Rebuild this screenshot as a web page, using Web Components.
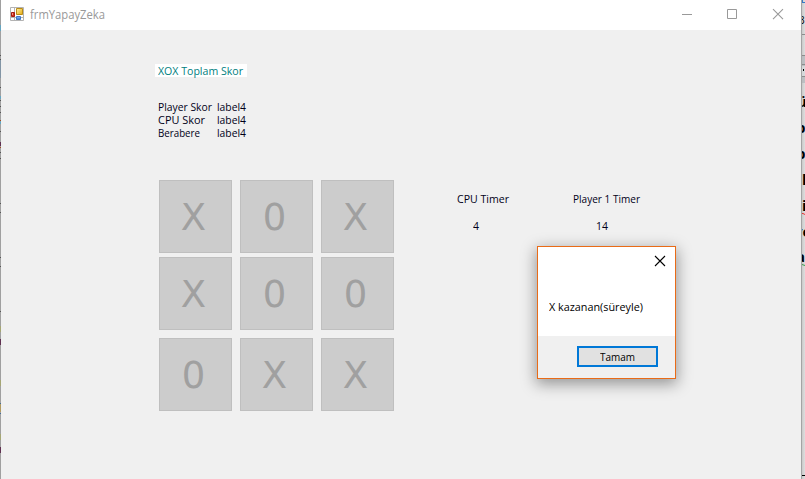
<!DOCTYPE html>
<html lang="tr"><head><meta charset="utf-8"><title>frmYapayZeka</title>
<style>
html,body{margin:0;height:479px;overflow:hidden;background:#ddd}
body{font:11px "Open Sans","Noto Sans",sans-serif;color:#000}
</style></head><body>
<app-desktop></app-desktop>
<script>
const define = (name, markup, init) => customElements.define(name, class extends HTMLElement {
  connectedCallback() {
    if (this.shadowRoot) return;
    this.attachShadow({mode: 'open'}).innerHTML = markup;
    if (init) init.call(this, this.shadowRoot);
  }
});

// A single line of text condensed to the width given by "w".
define('fit-text', `<style>
:host{display:block;height:13px;line-height:13px;white-space:nowrap}
span{display:inline-block;transform-origin:0 50%}
</style><span><slot></slot></span>`, function (root) {
  const span = root.querySelector('span'), w = +this.getAttribute('w');
  this.style.width = w + 'px';
  span.style.transform = 'scaleX(' + w / span.getBoundingClientRect().width + ')';
});

define('edge-left', `<style>:host{display:block;width:1px;height:479px}svg{display:block}</style>
<svg width="1" height="479" shape-rendering="crispEdges"><path fill="#a0a0a0" d="M0 0h1v479H0z"/>
<path fill="#66a5c0" d="M0 25h1v6H0zM0 96h1v3H0zM0 121h1v3H0z"/><path fill="#8295a5" d="M0 60h1v18H0z"/>
<path fill="#555" d="M0 55h1v1H0zM0 59h1v1H0zM0 87h1v1H0zM0 100h1v1H0zM0 106h1v1H0zM0 112h1v1H0zM0 131h1v1H0zM0 152h1v1H0zM0 158h1v1H0zM0 203h1v1H0zM0 212h1v1H0zM0 257h1v1H0zM0 266h1v1H0zM0 311h1v1H0z"/>
<path fill="#a5a674" d="M0 326h1v6H0zM0 380h1v6H0zM0 434h1v6H0z"/><path fill="#b09a62" d="M0 404h1v8H0z"/>
<path fill="#5f3050" d="M0 142h1v4H0zM0 339h1v6H0zM0 447h1v6H0z"/><path fill="#456b91" d="M0 403h1v1H0zM0 413h1v1H0z"/>
<path fill="#a54b1c" d="M0 120h1v1H0zM0 147h1v1H0z"/></svg>`);

define('edge-right', `<style>:host{display:block;width:4px;height:479px}svg{display:block}
text{font:bold 15px "Open Sans",sans-serif}</style>
<svg width="4" height="479"><defs><linearGradient id="s"><stop stop-color="#c3c3c3"/><stop offset="1" stop-color="#dedede"/></linearGradient></defs>
<path fill="url(#s)" d="M0 0h4v479H0z"/><path fill="#aeb2b7" d="M0 56h4v27H0z" opacity=".65"/>
<path fill="#fff" opacity=".4" d="M1 66h3v10H1z"/>
<path fill="#8c8c8c" d="M0 34h4v1H0zM0 55h4v1H0zM0 64h4v1H0zM0 76h4v1H0z"/><path fill="#3678c5" d="M1 0h1v2h2v1H1z"/>
<text x="-2" y="24" style="font-size:10px;font-weight:400">3</text><path d="M2 69h1v2H2z"/>
<text x="-4" y="107">ü</text><text x="-5" y="133">p</text><text x="-5" y="159">p</text>
<text x="1" y="185">l</text><text x="1" y="211">i</text><text x="-7" y="237">ye</text><text x="-5" y="262">a</text>
<path fill="none" stroke="#e33" d="M0 213.500h2l2 1"/><path fill="none" stroke="#389c48" d="M0 264.500h1l3 1"/>
<path d="M0 475h4v1H0z"/><path fill="#a4a4a4" d="M0 0h1v479H0z"/></svg>`);

define('title-bar', `<style>
:host{display:flex;height:30px;background:#fff;color:#999;align-items:center;box-sizing:border-box;padding-left:9px}
fit-text{margin-left:5px;height:16px;line-height:16px;font-size:12px}
.controls{margin-left:auto;display:flex;width:137px;height:30px}
svg{display:block}
.icon{margin-top:-2px}
</style>
<svg class="icon" width="15" height="15" viewBox="0 0 15 15"><defs>
<linearGradient id="y" x2="1" y2="1"><stop stop-color="#fff0a0"/><stop offset="1" stop-color="#e5ab12"/></linearGradient>
<linearGradient id="b" y2="1" x2="0"><stop stop-color="#8fc1ff"/><stop offset="1" stop-color="#3472cf"/></linearGradient></defs>
<path fill="#fff" stroke="#b3b3b3" d="M.5.500h13v13H.5zM4.500.5v13M.5 10.500h13"/>
<path fill="url(#y)" stroke="#b98c17" d="M6.500 1.500h6v6h-6z"/>
<path fill="#cd321f" stroke="#a41d13" d="M1.500 5.500h3v4h-3z"/><path fill="#ef9380" d="M2 6h1v2H2z"/>
<path fill="url(#b)" stroke="#3f78c8" d="M6.500 9.500h4v3h-4z"/></svg>
<fit-text w="75">frmYapayZeka</fit-text>
<div class="controls"><svg width="137" height="30" fill="none" stroke="#999"><path d="M18 14.500h10M63.500 9.500h9v9h-9z"/><path d="M109 9.200l10 10M119 9.200l-10 10" stroke-width="1.100"/></svg></div>`);

define('score-panel', `<style>
:host{display:block;width:92px;margin-left:154px;font-size:11.5px}
.head{background:#fff;color:#008080;height:13px;padding-left:3px}
.rows{display:grid;grid-template-columns:59px auto;grid-auto-rows:13px;margin:23px 0 0 3px;color:#000018}
</style><div class="head"><fit-text w="85">XOX Toplam Skor</fit-text></div>
<div class="rows"><fit-text w="54">Player Skor</fit-text><fit-text w="29">label4</fit-text>
<fit-text w="47">CPU Skor</fit-text><fit-text w="29">label4</fit-text>
<fit-text w="42">Berabere</fit-text><fit-text w="29">label4</fit-text></div>`);

define('game-cell', `<style>
:host{display:flex;align-items:center;justify-content:center;box-sizing:border-box;width:73px;height:73px;background:#ccc;border:1px solid #bfbfbf;color:#a0a0a0;font:37px/44px "DejaVu Sans",sans-serif;padding:2px 4px 0 0}
</style><slot></slot>`);

define('game-board', `<style>
:host{display:grid;grid-template-columns:repeat(3,73px);grid-template-rows:77px 81px 73px;column-gap:8px}
</style>` + [...'X0XX000XX'].map(c => `<game-cell>${c}</game-cell>`).join(''));

define('timer-panel', `<style>
:host{display:grid;grid-template-columns:116px 68px;row-gap:14px;align-content:start;padding-top:12px;font-size:11.5px;color:#000018}
.a{margin-left:16px}.b{margin-left:23px}
</style><fit-text w="52">CPU Timer</fit-text><fit-text w="67">Player 1 Timer</fit-text>
<fit-text class="a" w="6">4</fit-text><fit-text class="b" w="12">14</fit-text>`);

define('message-box', `<style>
:host{position:absolute;left:537px;top:246px;width:139px;height:133px;box-sizing:border-box;border:1px solid #e96b17;background:#fff;box-shadow:0 4px 14px 1px rgba(0,0,0,.38);display:flex;flex-direction:column}
.close{display:flex;justify-content:flex-end;padding:8px 9px 0 0;height:45px}
.msg{padding-left:11px;flex:1}
.foot{height:42px;background:#f0f0f0;display:flex;justify-content:flex-end;align-items:flex-start;box-sizing:border-box;padding:10px 17px 0 0}
button{all:unset;box-sizing:border-box;width:81px;height:21px;border:2px solid #0078d7;background:#e1e1e1;display:flex;align-items:center;justify-content:center}
</style><div class="close"><svg width="12" height="12"><path d="M1 1l10 10M11 1L1 11" stroke="#000" stroke-width="1.100"/></svg></div>
<div class="msg"><fit-text w="94">X kazanan(süreyle)</fit-text></div>
<div class="foot"><button><fit-text w="35">Tamam</fit-text></button></div>`);

define('app-window', `<style>
:host{display:block;width:800px;height:479px;background:#f0f0f0}
.body{padding-top:34px}.main{display:flex;margin:41px 0 0 158px;gap:63px}
</style><title-bar></title-bar><div class="body"><score-panel></score-panel>
<div class="main"><game-board></game-board><timer-panel></timer-panel></div></div>`);

define('app-desktop', `<style>:host{display:flex;position:relative;width:805px;height:479px;overflow:hidden}</style>
<edge-left></edge-left><app-window></app-window><edge-right></edge-right><message-box></message-box>`);
</script></body></html>
